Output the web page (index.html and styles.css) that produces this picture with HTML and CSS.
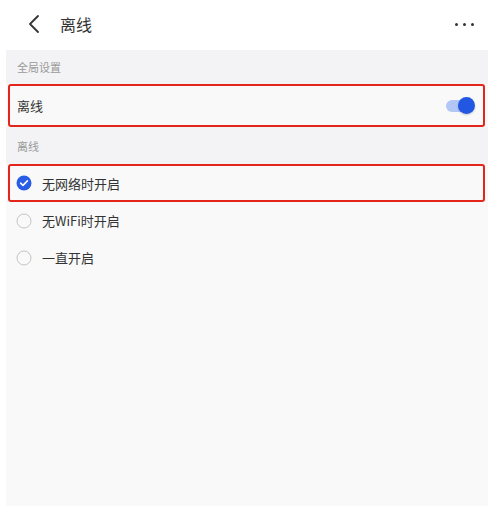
FILE: index.html
```html
<!DOCTYPE html>
<html lang="zh-CN">
<head>
<meta charset="utf-8">
<title>离线</title>
<link rel="stylesheet" href="styles.css">
</head>
<body>
<header class="topbar">
  <svg class="back" width="12" height="20" viewBox="0 0 12 20"><path d="M10 2 L2 10 L10 18" fill="none" stroke="#333" stroke-width="1.8" stroke-linecap="round" stroke-linejoin="round"/></svg>
  <h1 class="title">离线</h1>
  <div class="more"><span></span><span></span><span></span></div>
</header>
<main class="panel">
  <div class="section-label first">全局设置</div>
  <div class="row switch-row marked">
    <span class="row-text">离线</span>
    <span class="toggle on"><span class="knob"></span></span>
  </div>
  <div class="section-label second">离线</div>
  <div class="row radio-row marked">
    <svg class="radio" width="16" height="16" viewBox="0 0 16 16"><circle cx="8" cy="8" r="7.5" fill="#2a5de6"/><path d="M4.6 8.2 L7 10.4 L11.4 5.9" fill="none" stroke="#fff" stroke-width="1.6" stroke-linecap="round" stroke-linejoin="round"/></svg>
    <span class="row-text">无网络时开启</span>
  </div>
  <div class="row radio-row">
    <svg class="radio" width="16" height="16" viewBox="0 0 16 16"><circle cx="8" cy="8" r="7" fill="none" stroke="#c4c4c4" stroke-width="1"/></svg>
    <span class="row-text">无WiFi时开启</span>
  </div>
  <div class="row radio-row">
    <svg class="radio" width="16" height="16" viewBox="0 0 16 16"><circle cx="8" cy="8" r="7" fill="none" stroke="#c4c4c4" stroke-width="1"/></svg>
    <span class="row-text">一直开启</span>
  </div>
</main>
</body>
</html>
```
FILE: styles.css
```css
* { box-sizing: border-box; }

html, body {
  margin: 0;
  padding: 0;
  background: #ffffff;
  font-family: "Noto Sans CJK SC", "Noto Sans", sans-serif;
  color: #333;
}

body {
  width: 492px;
  height: 506px;
  display: flex;
  flex-direction: column;
  overflow: hidden;
}

.topbar {
  height: 50px;
  flex: none;
  display: flex;
  align-items: center;
  padding: 0 18px 0 28px;
}

.back { flex: none; margin-top: -2px; }

.title {
  margin: 0 0 0 20px;
  font-size: 16px;
  font-weight: 400;
  color: #333;
  line-height: 1;
  margin-top: -2px;
  flex: 1;
}

.more {
  display: flex;
  gap: 5px;
  margin-top: -2px;
}
.more span {
  width: 3px;
  height: 3px;
  border-radius: 50%;
  background: #333;
}

.panel {
  flex: 1;
  margin: 0 4px 0 6px;
  background: #f9f9f9;
  display: flex;
  flex-direction: column;
}

.section-label {
  background: #f3f3f5;
  font-size: 11px;
  color: #9a9a9a;
  padding-left: 11px;
  display: flex;
  align-items: center;
}
.section-label.first { height: 34px; padding-top: 0; }
.section-label.second { height: 37px; }

.row {
  display: flex;
  align-items: center;
  margin: 0 3px 0 2px;
  padding: 0 9px 0 9px;
  border: 2px solid transparent;
  border-radius: 3px;
  background: #f9f9f9;
}
.row.marked { border-color: #e3261b; }

.switch-row { height: 43px; padding-left: 7px; }

.radio-row { height: 37px; padding-left: 6px; }
.radio-row.marked { height: 38px; }

.row-text {
  font-size: 13px;
  color: #333;
  flex: 1;
}

.radio { flex: none; margin-right: 10px; }

.toggle {
  position: relative;
  width: 28px;
  height: 12px;
  border-radius: 6px;
  background: #b3c7f6;
  margin-right: 0;
}
.toggle .knob {
  position: absolute;
  right: -1px;
  top: 50%;
  width: 17px;
  height: 17px;
  margin-top: -8.5px;
  border-radius: 50%;
  background: #2157e2;
  box-shadow: 0 1px 2px rgba(0, 0, 0, 0.2);
}
```
